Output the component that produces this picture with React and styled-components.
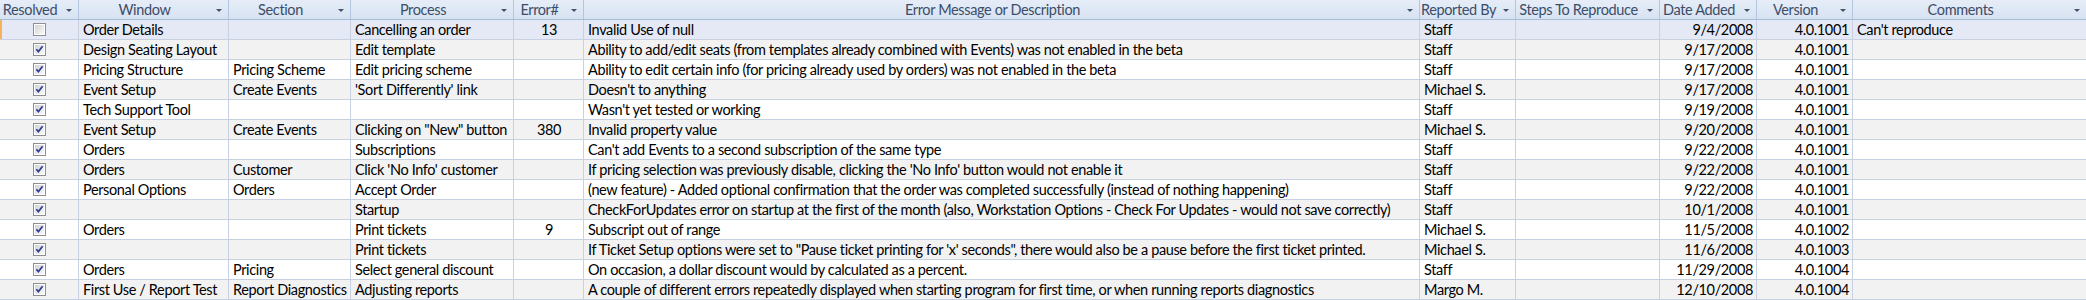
import React from "react";
import styled, { createGlobalStyle } from "styled-components";

const GlobalStyle = createGlobalStyle`
  html, body { margin: 0; padding: 0; background: #ffffff; }
  * { box-sizing: border-box; }
`;

const columns = [
  { key: "resolved", label: "Resolved", width: 79, align: "center" },
  { key: "window", label: "Window", width: 150, align: "left" },
  { key: "section", label: "Section", width: 122, align: "left" },
  { key: "process", label: "Process", width: 163, align: "left" },
  { key: "error", label: "Error#", width: 70, align: "center" },
  { key: "message", label: "Error Message or Description", width: 836, align: "left" },
  { key: "reported", label: "Reported By", width: 96, align: "left" },
  { key: "steps", label: "Steps To Reproduce", width: 144, align: "left" },
  { key: "date", label: "Date Added", width: 97, align: "right" },
  { key: "version", label: "Version", width: 96, align: "right" },
  { key: "comments", label: "Comments", width: 233, align: "left" },
];

const rows = [
  { resolved: false, window: "Order Details", section: "", process: "Cancelling an order", error: "13", message: "Invalid Use of null", reported: "Staff", steps: "", date: "9/4/2008", version: "4.0.1001", comments: "Can't reproduce" },
  { resolved: true, window: "Design Seating Layout", section: "", process: "Edit template", error: "", message: "Ability to add/edit seats (from templates already combined with Events) was not enabled in the beta", reported: "Staff", steps: "", date: "9/17/2008", version: "4.0.1001", comments: "" },
  { resolved: true, window: "Pricing Structure", section: "Pricing Scheme", process: "Edit pricing scheme", error: "", message: "Ability to edit certain info (for pricing already used by orders) was not enabled in the beta", reported: "Staff", steps: "", date: "9/17/2008", version: "4.0.1001", comments: "" },
  { resolved: true, window: "Event Setup", section: "Create Events", process: "'Sort Differently' link", error: "", message: "Doesn't to anything", reported: "Michael S.", steps: "", date: "9/17/2008", version: "4.0.1001", comments: "" },
  { resolved: true, window: "Tech Support Tool", section: "", process: "", error: "", message: "Wasn't yet tested or working", reported: "Staff", steps: "", date: "9/19/2008", version: "4.0.1001", comments: "" },
  { resolved: true, window: "Event Setup", section: "Create Events", process: "Clicking on \"New\" button", error: "380", message: "Invalid property value", reported: "Michael S.", steps: "", date: "9/20/2008", version: "4.0.1001", comments: "" },
  { resolved: true, window: "Orders", section: "", process: "Subscriptions", error: "", message: "Can't add Events to a second subscription of the same type", reported: "Staff", steps: "", date: "9/22/2008", version: "4.0.1001", comments: "" },
  { resolved: true, window: "Orders", section: "Customer", process: "Click 'No Info' customer", error: "", message: "If pricing selection was previously disable, clicking the 'No Info' button would not enable it", reported: "Staff", steps: "", date: "9/22/2008", version: "4.0.1001", comments: "" },
  { resolved: true, window: "Personal Options", section: "Orders", process: "Accept Order", error: "", message: "(new feature) - Added optional confirmation that the order was completed successfully (instead of nothing happening)", reported: "Staff", steps: "", date: "9/22/2008", version: "4.0.1001", comments: "" },
  { resolved: true, window: "", section: "", process: "Startup", error: "", message: "CheckForUpdates error on startup at the first of the month (also, Workstation Options - Check For Updates - would not save correctly)", reported: "Staff", steps: "", date: "10/1/2008", version: "4.0.1001", comments: "" },
  { resolved: true, window: "Orders", section: "", process: "Print tickets", error: "9", message: "Subscript out of range", reported: "Michael S.", steps: "", date: "11/5/2008", version: "4.0.1002", comments: "" },
  { resolved: true, window: "", section: "", process: "Print tickets", error: "", message: "If Ticket Setup options were set to \"Pause ticket printing for 'x' seconds\", there would also be a pause before the first ticket printed.", reported: "Michael S.", steps: "", date: "11/6/2008", version: "4.0.1003", comments: "" },
  { resolved: true, window: "Orders", section: "Pricing", process: "Select general discount", error: "", message: "On occasion,  a dollar discount would by calculated as a percent.", reported: "Staff", steps: "", date: "11/29/2008", version: "4.0.1004", comments: "" },
  { resolved: true, window: "First Use / Report Test", section: "Report Diagnostics", process: "Adjusting reports", error: "", message: "A couple of different errors repeatedly displayed when starting program for first time, or when running reports diagnostics", reported: "Margo M.", steps: "", date: "12/10/2008", version: "4.0.1004", comments: "" },
];

const template = columns.map((c) => `${c.width}px`).join(" ");

const Sheet = styled.div`
  width: 2086px;
  font-family: "Lato", "Open Sans", sans-serif;
  font-size: 14.5px;
  letter-spacing: -0.37px;
  color: #000;
`;

const HeaderRow = styled.div`
  display: grid;
  grid-template-columns: ${template};
  height: 20px;
  background: linear-gradient(#e6edf8, #d7e2f2);
  border-bottom: 1px solid #a8bcd8;
`;

const HeaderCell = styled.div`
  display: flex;
  align-items: center;
  height: 19px;
  border-right: 1px solid #b4c6df;
  overflow: hidden;
  color: #3c4d68;
  &:last-child { border-right: none; }
`;

const HeaderLabel = styled.span`
  flex: 1;
  min-width: 0;
  text-align: center;
  white-space: nowrap;
  overflow: hidden;
  line-height: 19px;
`;

const DropArrow = styled.span`
  flex: none;
  width: 18px;
  display: flex;
  justify-content: center;
  align-items: center;
  padding-top: 1px;
  &::after {
    content: "";
    border-left: 3px solid transparent;
    border-right: 3px solid transparent;
    border-top: 3px solid #44536b;
  }
`;

const Row = styled.div`
  position: relative;
  display: grid;
  grid-template-columns: ${template};
  height: 20px;
  background: ${(p) => (p.$selected ? "#e4e9f5" : p.$shaded ? "#f2f2f2" : "#ffffff")};
  border-bottom: 1px solid #c7d1e2;
  &::before {
    content: "";
    display: ${(p) => (p.$selected ? "block" : "none")};
    position: absolute;
    left: 0;
    top: 0;
    width: 2px;
    height: 19px;
    background: #f7b15a;
  }
`;

const Cell = styled.div`
  height: 19px;
  line-height: 19px;
  padding: 0 3px 0 4px;
  border-right: 1px solid #c7d1e2;
  white-space: nowrap;
  overflow: hidden;
  text-align: ${(p) => p.$align};
  &:last-child { border-right: none; }
`;

const CheckCell = styled.div`
  height: 19px;
  display: flex;
  align-items: center;
  justify-content: center;
  border-right: 1px solid #c7d1e2;
`;

const Box = styled.svg`
  display: block;
  width: 13px;
  height: 13px;
  margin-left: 1px;
`;

function CheckBox({ checked }) {
  return (
    <Box viewBox="0 0 13 13">
      <defs>
        <linearGradient id="cbg" x1="0" y1="0" x2="1" y2="1">
          <stop offset="0" stopColor="#d4d4d4" />
          <stop offset="1" stopColor="#f8f8f8" />
        </linearGradient>
      </defs>
      <rect x="0.5" y="0.5" width="12" height="12" fill="#fff" stroke="#8e8f8f" />
      <rect x="2" y="2" width="9" height="9" fill="url(#cbg)" />
      {checked && (
        <path d="M3.3 6.2 L5.4 8.6 L9.6 3.2" fill="none" stroke="#2d3f91" strokeWidth="1.7" />
      )}
    </Box>
  );
}

export default function App() {
  return (
    <>
      <GlobalStyle />
      <Sheet>
        <HeaderRow>
          {columns.map((c) => (
            <HeaderCell key={c.key}>
              <HeaderLabel>{c.label}</HeaderLabel>
              <DropArrow />
            </HeaderCell>
          ))}
        </HeaderRow>
        {rows.map((r, i) => (
          <Row key={i} $selected={i === 0} $shaded={i % 2 === 1}>
            {columns.map((c) =>
              c.key === "resolved" ? (
                <CheckCell key={c.key}>
                  <CheckBox checked={r.resolved} />
                </CheckCell>
              ) : (
                <Cell key={c.key} $align={c.align}>
                  {r[c.key]}
                </Cell>
              )
            )}
          </Row>
        ))}
      </Sheet>
    </>
  );
}
